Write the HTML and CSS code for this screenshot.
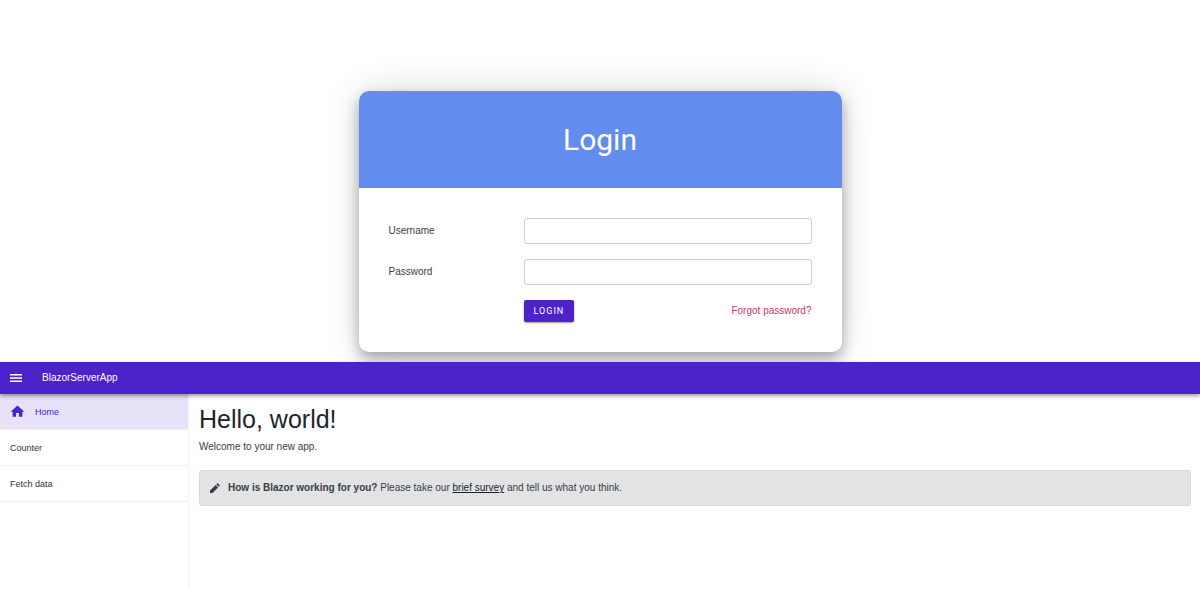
FILE: index.html
```html
<!DOCTYPE html>
<html lang="en">
<head>
    <meta charset="UTF-8">
    <meta name="viewport" content="width=device-width, initial-scale=1.0">
    <title>BlazorServerApp</title>
    <link rel="stylesheet" href="styles.css">
</head>
<body>
    <section class="login">
        <div class="card">
            <h1 class="card-header">Login</h1>
            <form class="card-body">
                <label for="username">Username</label>
                <input type="text" id="username">

                <label for="password">Password</label>
                <input type="password" id="password">

                <div class="actions">
                    <button type="submit">LOGIN</button>
                    <a href="#forgot">Forgot password?</a>
                </div>
            </form>
        </div>
    </section>

    <div class="app">
        <header class="app-bar">
            <button type="button" class="menu-button" aria-label="Menu">
                <svg width="12" height="8" viewBox="0 0 12 8">
                    <path d="M0 0h12v1.4H0zM0 3.3h12v1.4H0zM0 6.6h12V8H0z" fill="#fff"/>
                </svg>
            </button>
            <span>BlazorServerApp</span>
        </header>

        <div class="layout">
            <nav class="sidebar">
                <a href="#home" class="active">
                    <svg width="15" height="15" viewBox="0 0 24 24">
                        <path d="M9.8 20.5v-6h4.4v6h5.6v-8H23L12 2.5 1 12.5h3.2v8z" fill="currentColor"/>
                    </svg>
                    Home
                </a>
                <a href="#counter">Counter</a>
                <a href="#fetchdata">Fetch data</a>
            </nav>

            <main class="content">
                <h2>Hello, world!</h2>
                <p>Welcome to your new app.</p>
                <div class="alert">
                    <svg width="10" height="10" viewBox="0 0 8 8">
                        <path d="M6 0l-1 1 2 2 1-1-2-2zm-1.5 1.5L0 6v2h2l4.5-4.5-2-2z" fill="currentColor"/>
                    </svg>
                    <span>
                        <strong>How is Blazor working for you?</strong>
                        Please take our <a href="#survey">brief survey</a> and tell us what you think.
                    </span>
                </div>
            </main>
        </div>
    </div>
</body>
</html>
```
FILE: styles.css
```css
* {
    box-sizing: border-box;
}

body {
    font-family: "Liberation Sans", Arial, sans-serif;
    font-size: 10px;
    line-height: 16px;
    color: #383d41;
    background: #fff;
    margin: 0;
    min-height: 100vh;
    display: flex;
    flex-direction: column;
}

button {
    border: none;
    cursor: pointer;
}

.login {
    padding: 91px 20px 10px;
}

.card {
    max-width: 483px;
    margin: 0 auto;
    background: #fff;
    border-radius: 10px;
    box-shadow: 0 7px 14px rgba(0, 0, 0, 0.3), 0 0 36px rgba(0, 0, 0, 0.15);
    overflow: hidden;
}

.card-header {
    margin: 0;
    padding: 30px;
    background: #628dee;
    color: #fff;
    font-family: Roboto, sans-serif;
    font-size: 30px;
    font-weight: 400;
    line-height: 37px;
    text-align: center;
}

.card-body {
    display: grid;
    grid-template-columns: 120px 1fr;
    gap: 15px;
    align-items: center;
    padding: 30px;
}

.card-body input {
    width: 100%;
    height: 26px;
    padding: 4px 8px;
    border: 1px solid #ccc;
    border-radius: 3px;
    font: inherit;
}

.actions {
    grid-column: 2;
    display: flex;
    justify-content: space-between;
    align-items: center;
}

.actions button {
    height: 22px;
    padding: 0 10px;
    background: #4c22cb;
    color: #fff;
    border-radius: 2px;
    box-shadow: 0 1px 2px rgba(0, 0, 0, 0.4);
    font-family: Roboto, sans-serif;
    font-size: 9px;
    font-weight: 400;
    letter-spacing: 1px;
}

.actions a {
    color: #c9356b;
    text-decoration: none;
}

.app {
    position: relative;
    flex: 1;
    display: flex;
    flex-direction: column;
    background: #fff;
}

.app-bar {
    position: relative;
    display: flex;
    align-items: center;
    gap: 20px;
    height: 32px;
    padding: 0 10px;
    background: #4c22cb;
    color: #fff;
    box-shadow: 0 2px 4px rgba(0, 0, 0, 0.4);
}

.menu-button {
    display: flex;
    padding: 0;
    background: none;
}

.layout {
    flex: 1;
    display: flex;
}

.sidebar {
    width: 189px;
    border-right: 1px solid #f3f3f3;
    font-size: 9px;
}

.sidebar a {
    display: flex;
    align-items: center;
    gap: 10px;
    height: 36px;
    padding: 0 10px;
    border-bottom: 1px solid #eee;
    color: #333;
    text-decoration: none;
}

.sidebar a.active {
    background: #e8e2f9;
    color: #4c22cb;
}

.content {
    flex: 1;
    padding: 10px 9px 10px 10px;
}

.content h2 {
    margin: 0;
    color: #212529;
    font-size: 25px;
    font-weight: 400;
    line-height: 30px;
}

.content p {
    margin: 5px 0 15px;
}

.alert {
    display: flex;
    align-items: center;
    gap: 8px;
    padding: 9px 10px;
    background: #e2e3e5;
    border: 1px solid #d6d8db;
    border-radius: 3px;
}

.alert a {
    color: #212529;
}
```
